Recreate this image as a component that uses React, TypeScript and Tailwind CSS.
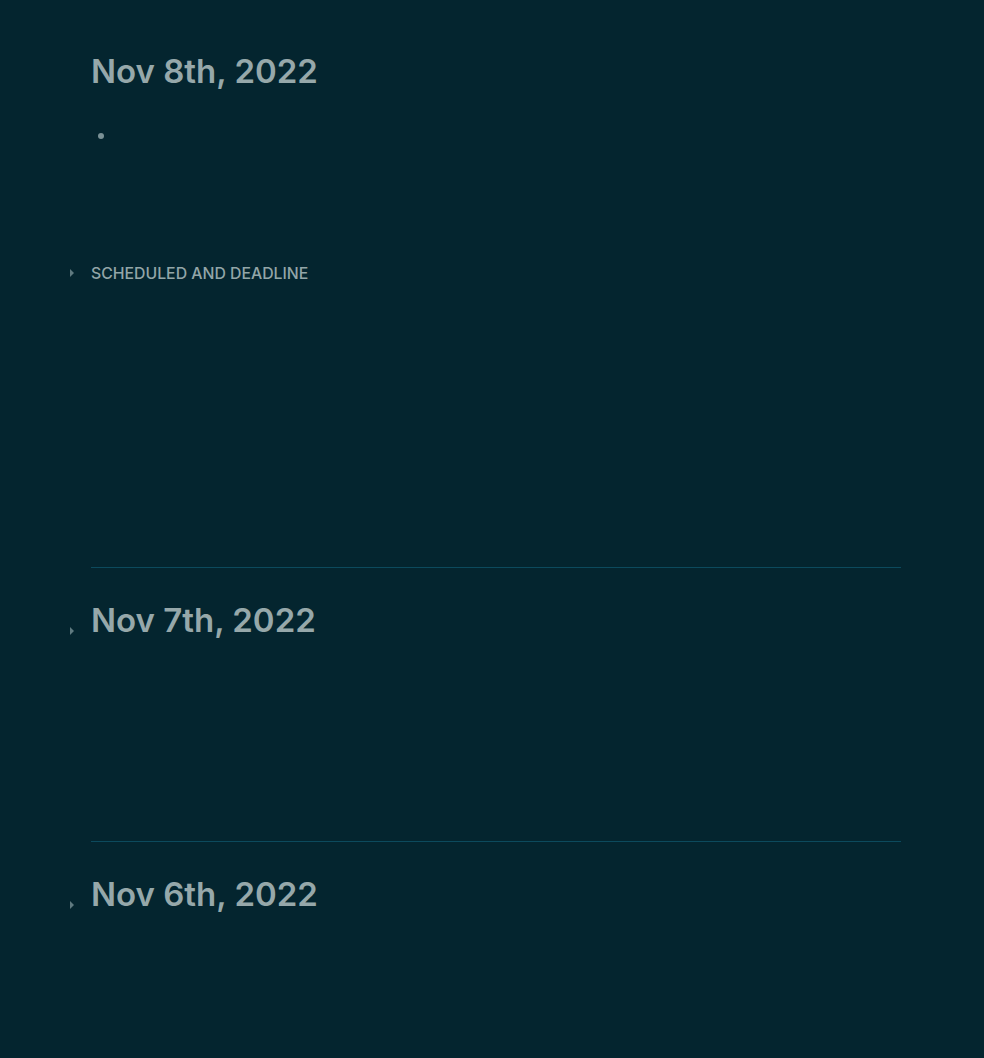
import React from "react";

function Caret({ className }: { className?: string }) {
  return (
    <svg width="6" height="10" viewBox="0 0 6 10" className={className}>
      <path d="M1 1 L5 5 L1 9 Z" fill="#5f7a80" />
    </svg>
  );
}

function Title({ text, caret }: { text: string; caret?: boolean }) {
  return (
    <div className="relative">
      {caret && <Caret className="absolute -left-[22px] top-[28px]" />}
      <h1 className="text-[33px] font-semibold leading-[44px] text-[#96a8aa]">
        {text}
      </h1>
    </div>
  );
}

export default function App() {
  return (
    <div
      className="min-h-[1058px] w-full bg-[#04252f]"
      style={{ fontFamily: "Inter, 'Noto Sans', sans-serif" }}
    >
      <div className="ml-[91px] w-[810px]">
        <section className="h-[568px] border-b border-[#0c4a5d] pt-[49px]">
          <Title text="Nov 8th, 2022" />
          <div className="mt-[31px] flex h-[24px] items-center pl-[7px]">
            <span className="h-[6px] w-[6px] rounded-full bg-[#7a9196]" />
          </div>
          <div className="relative mt-[117px] flex items-center">
            <Caret className="absolute -left-[22px] top-[3px]" />
            <span className="text-[15.8px] font-medium leading-[18px] text-[#93a6a8]">
              SCHEDULED AND DEADLINE
            </span>
          </div>
        </section>
        <section className="h-[274px] border-b border-[#0c4a5d] pt-[30px]">
          <Title text="Nov 7th, 2022" caret />
        </section>
        <section className="pt-[30px]">
          <Title text="Nov 6th, 2022" caret />
        </section>
      </div>
    </div>
  );
}
